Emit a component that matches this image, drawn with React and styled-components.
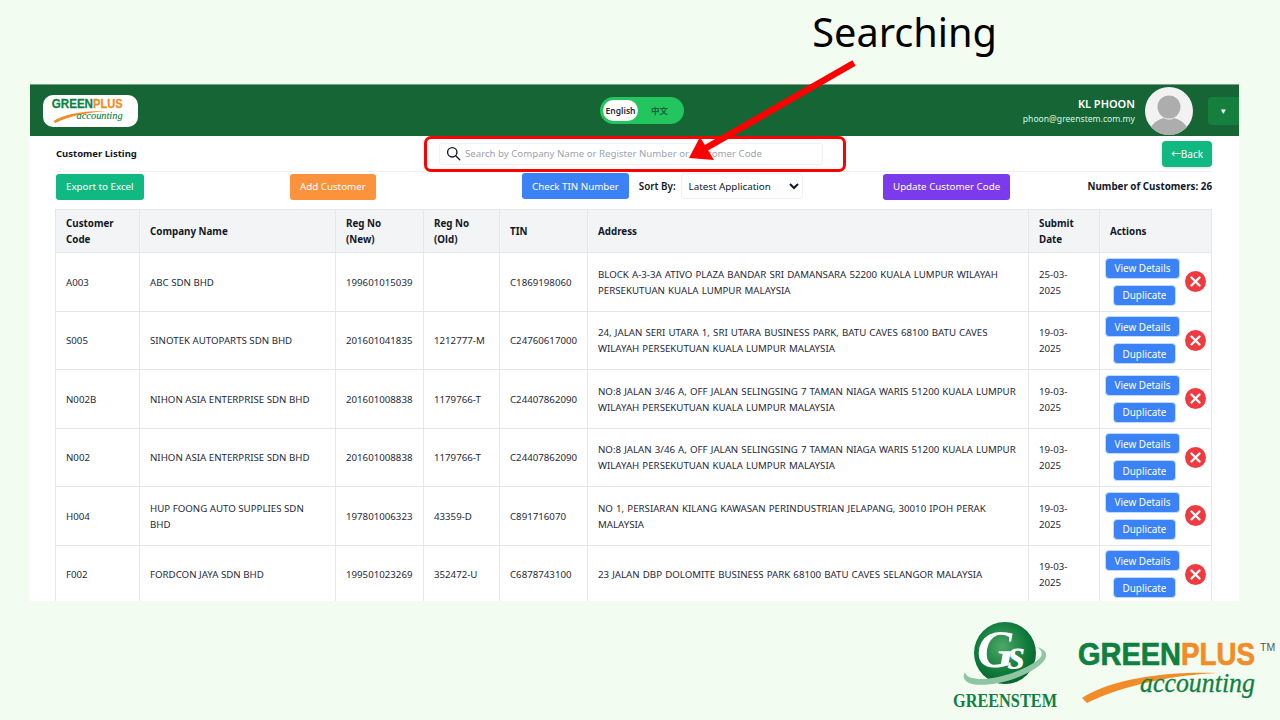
import styled, { createGlobalStyle } from "styled-components";
import { useState } from "react";

const customers = [
  {
    code: "A003",
    name: "ABC SDN BHD",
    regNew: "199601015039",
    regOld: "",
    tin: "C1869198060",
    address:
      "BLOCK A-3-3A ATIVO PLAZA BANDAR SRI DAMANSARA 52200 KUALA LUMPUR WILAYAH PERSEKUTUAN KUALA LUMPUR MALAYSIA",
    date: "25-03-2025",
  },
  {
    code: "S005",
    name: "SINOTEK AUTOPARTS SDN BHD",
    regNew: "201601041835",
    regOld: "1212777-M",
    tin: "C24760617000",
    address:
      "24, JALAN SERI UTARA 1, SRI UTARA BUSINESS PARK, BATU CAVES 68100 BATU CAVES WILAYAH PERSEKUTUAN KUALA LUMPUR MALAYSIA",
    date: "19-03-2025",
  },
  {
    code: "N002B",
    name: "NIHON ASIA ENTERPRISE SDN BHD",
    regNew: "201601008838",
    regOld: "1179766-T",
    tin: "C24407862090",
    address:
      "NO:8 JALAN 3/46 A, OFF JALAN SELINGSING 7 TAMAN NIAGA WARIS 51200 KUALA LUMPUR WILAYAH PERSEKUTUAN KUALA LUMPUR MALAYSIA",
    date: "19-03-2025",
  },
  {
    code: "N002",
    name: "NIHON ASIA ENTERPRISE SDN BHD",
    regNew: "201601008838",
    regOld: "1179766-T",
    tin: "C24407862090",
    address:
      "NO:8 JALAN 3/46 A, OFF JALAN SELINGSING 7 TAMAN NIAGA WARIS 51200 KUALA LUMPUR WILAYAH PERSEKUTUAN KUALA LUMPUR MALAYSIA",
    date: "19-03-2025",
  },
  {
    code: "H004",
    name: "HUP FOONG AUTO SUPPLIES SDN BHD",
    regNew: "197801006323",
    regOld: "43359-D",
    tin: "C891716070",
    address:
      "NO 1, PERSIARAN KILANG KAWASAN PERINDUSTRIAN JELAPANG, 30010 IPOH PERAK MALAYSIA",
    date: "19-03-2025",
  },
  {
    code: "F002",
    name: "FORDCON JAYA SDN BHD",
    regNew: "199501023269",
    regOld: "352472-U",
    tin: "C6878743100",
    address: "23 JALAN DBP DOLOMITE BUSINESS PARK 68100 BATU CAVES SELANGOR MALAYSIA",
    date: "19-03-2025",
  },
];

const GreenplusLogo = ({ width, height, tm }) => (
  <svg width={width} height={height} viewBox="0 0 200 70">
    <text x="2" y="27" fontFamily="'Liberation Sans', sans-serif" fontWeight="700" fontSize="31" fill="#0f8040" stroke="#0f8040" strokeWidth="0.7" textLength="103" lengthAdjust="spacingAndGlyphs">
      GREEN
    </text>
    <text x="105" y="27" fontFamily="'Liberation Sans', sans-serif" fontWeight="700" fontSize="31" fill="#f28c28" stroke="#f28c28" strokeWidth="0.7" textLength="74" lengthAdjust="spacingAndGlyphs">
      PLUS
    </text>
    {tm && (
      <text x="184" y="13" fontFamily="'Liberation Sans', sans-serif" fontSize="10.5" fill="#555">
        TM
      </text>
    )}
    <path d="M6 60 C30 44 80 33 141 35 C100 37 50 46 11 65 Z" fill="#f28c28" />
    <text x="64" y="54" fontFamily="'Liberation Serif', serif" fontStyle="italic" fontSize="28" fill="#0f8040" stroke="#0f8040" strokeWidth="0.3" textLength="115" lengthAdjust="spacingAndGlyphs">
      accounting
    </text>
  </svg>
);

const GreenstemLogo = () => (
  <svg width="106" height="90" viewBox="0 0 106 90">
    <defs>
      <radialGradient id="ball" cx="0.45" cy="0.4" r="0.7">
        <stop offset="0" stopColor="#4ea868" />
        <stop offset="0.6" stopColor="#0e7a3a" />
        <stop offset="1" stopColor="#06592a" />
      </radialGradient>
    </defs>
    <circle cx="53" cy="31" r="31" fill="url(#ball)" />
    <path d="M85 25 C95 28 97 34 90 41 C76 55 40 66 20 62 C12 60 10 55 13 50 C14 55 20 57 30 57 C52 57 80 44 88 36 C91 32 90 28 85 25 Z" fill="#8fc5a0" />
    <text x="25" y="45" fontFamily="'Liberation Serif', serif" fontStyle="italic" fontWeight="700" fontSize="52" fill="#fff">
      G
    </text>
    <text x="56" y="47" fontFamily="'Liberation Serif', serif" fontStyle="italic" fontWeight="700" fontSize="44" fill="#fff">
      s
    </text>
    <text x="53" y="85" textAnchor="middle" fontFamily="'Liberation Serif', serif" fontWeight="700" fontSize="18" fill="#0f8040" textLength="104" lengthAdjust="spacingAndGlyphs">
      GREENSTEM
    </text>
  </svg>
);

const SearchIcon = () => (
  <svg width="15" height="15" viewBox="0 0 24 24" fill="none" stroke="#111827" strokeWidth="2.2" strokeLinecap="round">
    <circle cx="10" cy="10" r="7.5" />
    <path d="M16 16l6 6" />
  </svg>
);

const RemoveIcon = () => (
  <svg width="21" height="21" viewBox="0 0 21 21">
    <circle cx="10.5" cy="10.5" r="10.5" fill="#ef3b40" />
    <path d="M6.5 6.5l8 8M14.5 6.5l-8 8" stroke="#fff" strokeWidth="2.4" strokeLinecap="round" />
  </svg>
);

const AvatarImage = () => (
  <svg width="48" height="48" viewBox="0 0 48 48">
    <circle cx="24" cy="24" r="24" fill="#f2f2f2" />
    <circle cx="24" cy="20" r="11.5" fill="#adadad" />
    <path d="M6 40 C10 34 15 32 19 31 C22 33 26 33 29 31 C33 32 38 34 42 40 A24 24 0 0 1 6 40 Z" fill="#adadad" />
  </svg>
);

export default function App() {
  const [sort, setSort] = useState("latest");
  return (
    <Slide>
      <GlobalStyle />
      <Caption>Searching</Caption>
      <AppWindow>
        <Header>
          <LogoPill>
            <GreenplusLogo width={80} height={28} />
          </LogoPill>
          <LangToggle>
            <LangOption active>English</LangOption>
            <LangOption>中文</LangOption>
          </LangToggle>
          <UserArea>
            <UserText>
              <UserName>KL PHOON</UserName>
              <UserMail>phoon@greenstem.com.my</UserMail>
            </UserText>
            <AvatarImage />
            <MenuButton>▾</MenuButton>
          </UserArea>
        </Header>
        <Content>
          <TitleRow>
            <PageTitle>Customer Listing</PageTitle>
            <SearchBox>
              <SearchIcon />
              <SearchInput placeholder="Search by Company Name or Register Number or Customer Code" />
            </SearchBox>
            <BackButton>←Back</BackButton>
          </TitleRow>
          <ActionRow>
            <div>
              <ActionButton color="#10b981">Export to Excel</ActionButton>
            </div>
            <div>
              <ActionButton color="#fb923c">Add Customer</ActionButton>
            </div>
            <SortGroup>
              <ActionButton color="#3b82f6">Check TIN Number</ActionButton>
              <SortLabel>Sort By:</SortLabel>
              <SortSelect value={sort} onChange={(e) => setSort(e.target.value)}>
                <option value="latest">Latest Application</option>
                <option value="oldest">Oldest Application</option>
              </SortSelect>
            </SortGroup>
            <div>
              <ActionButton color="#7c3aed">Update Customer Code</ActionButton>
            </div>
            <CustomerCount>Number of Customers: 26</CustomerCount>
          </ActionRow>
          <Table>
            <colgroup>
              <col width="84" />
              <col width="196" />
              <col width="88" />
              <col width="76" />
              <col width="88" />
              <col width="441" />
              <col width="71" />
              <col width="112" />
            </colgroup>
            <thead>
              <tr>
                <Th>Customer Code</Th>
                <Th>Company Name</Th>
                <Th>
                  Reg No
                  <br />
                  (New)
                </Th>
                <Th>
                  Reg No
                  <br />
                  (Old)
                </Th>
                <Th>TIN</Th>
                <Th>Address</Th>
                <Th>Submit Date</Th>
                <Th>Actions</Th>
              </tr>
            </thead>
            <tbody>
              {customers.map((c) => (
                <tr key={c.code}>
                  <Td>{c.code}</Td>
                  <Td>{c.name}</Td>
                  <Td>{c.regNew}</Td>
                  <Td>{c.regOld}</Td>
                  <Td>{c.tin}</Td>
                  <AddressCell>{c.address}</AddressCell>
                  <Td>{c.date}</Td>
                  <ActionCell>
                    <RowActions>
                      <RowButtons>
                        <RowButton>View Details</RowButton>
                        <RowButton small>Duplicate</RowButton>
                      </RowButtons>
                      <RemoveIcon />
                    </RowActions>
                  </ActionCell>
                </tr>
              ))}
            </tbody>
          </Table>
        </Content>
      </AppWindow>
      <Footer>
        <GreenstemLogo />
        <PlusMark>
          <GreenplusLogo width={200} height={70} tm />
        </PlusMark>
      </Footer>
      <HighlightBox />
      <ArrowLayer width="1280" height="720" viewBox="0 0 1280 720">
        <path d="M854 63L706 148" stroke="#ff0000" strokeWidth="6.5" fill="none" />
        <path d="M689 158L700 137L714 160Z" fill="#ff0000" />
      </ArrowLayer>
    </Slide>
  );
}

const GlobalStyle = createGlobalStyle`
  html, body {
    margin: 0;
    padding: 0;
    background: #f3fcf0;
  }
  * {
    box-sizing: border-box;
  }
`;

const Slide = styled.div`
  position: relative;
  width: 1280px;
  height: 720px;
  overflow: hidden;
  background: #f3fcf0;
  font-family: "Noto Sans", "Noto Sans CJK SC", sans-serif;
  color: #111827;
`;

const Caption = styled.div`
  height: 84px;
  padding: 6px 283px 0 0;
  text-align: right;
  font-size: 39.7px;
  line-height: 52px;
  color: #000;
`;

const AppWindow = styled.div`
  width: 1209px;
  height: 517px;
  margin-left: 30px;
  background: #fff;
  overflow: hidden;
`;

const Header = styled.header`
  height: 52px;
  background: #166534;
  border-top: 1px solid #7f9c8a;
  padding: 0 0 0 13px;
  display: grid;
  grid-template-columns: 1fr auto 1fr;
  align-items: center;
`;

const LogoPill = styled.div`
  width: 95px;
  height: 32px;
  background: #fff;
  border-radius: 10px;
  display: flex;
  align-items: center;
  justify-content: center;
`;

const LangToggle = styled.div`
  width: 84px;
  height: 27px;
  margin-left: 2px;
  padding: 3px;
  background: #22c55e;
  border-radius: 14px;
  display: flex;
  align-items: center;
  font-size: 8.5px;
  font-weight: 600;
`;

const LangOption = styled.span`
  width: ${({ active }) => (active ? "36px" : "44px")};
  height: 21px;
  line-height: 21px;
  text-align: center;
  border-radius: 11px;
  background: ${({ active }) => (active ? "#fff" : "transparent")};
  color: ${({ active }) => (active ? "#1f2937" : "#166534")};
`;

const UserArea = styled.div`
  display: flex;
  align-items: center;
  justify-content: flex-end;
`;

const UserText = styled.div`
  text-align: right;
  margin-right: 10px;
`;

const UserName = styled.div`
  font-size: 11px;
  font-weight: 600;
  line-height: 16px;
  color: #fff;
`;

const UserMail = styled.div`
  font-size: 8.6px;
  line-height: 14px;
  color: #d1fae5;
`;

const MenuButton = styled.button`
  width: 31px;
  height: 28px;
  margin-left: 15px;
  padding: 0;
  border: none;
  border-radius: 4px 0 0 4px;
  background: #15803d;
  color: #fff;
  font-size: 9px;
`;

const Content = styled.main`
  padding: 0 27px 0 26px;
`;

const TitleRow = styled.div`
  height: 36px;
  display: flex;
  align-items: center;
  border-bottom: 1px solid #f0f0f0;
`;

const PageTitle = styled.h1`
  width: 383px;
  margin: 0;
  font-size: 9.5px;
  font-weight: 700;
  color: #111827;
`;

const SearchBox = styled.label`
  width: 384px;
  height: 22px;
  padding-left: 6px;
  display: flex;
  align-items: center;
  gap: 4px;
  background: #fff;
  border: 1px solid #eef0f3;
  border-radius: 3px;
`;

const SearchInput = styled.input`
  flex: 1;
  min-width: 0;
  border: none;
  outline: none;
  padding: 0;
  font-family: inherit;
  font-size: 9.67px;
  &::placeholder {
    color: #9ca3af;
    opacity: 1;
  }
`;

const BackButton = styled.button`
  width: 50px;
  height: 26px;
  margin-left: auto;
  padding: 0;
  border: none;
  border-radius: 4px;
  background: #10b981;
  color: #fff;
  font-family: inherit;
  font-size: 10px;
  box-shadow: 0 1px 3px rgba(0, 0, 0, 0.15);
`;

const ActionRow = styled.div`
  display: grid;
  grid-template-columns: 234px 232px 361px 126px 1fr;
  align-items: center;
  margin-top: 1px;
  height: 26px;
`;

const ActionButton = styled.button`
  height: 26px;
  padding: 0 10px;
  border: none;
  border-radius: 3px;
  background: ${({ color }) => color};
  color: #fff;
  font-family: inherit;
  font-size: 9.75px;
  white-space: nowrap;
`;

const SortGroup = styled.div`
  display: flex;
  align-items: center;
`;

const SortLabel = styled.span`
  margin: 0 5px 0 10px;
  font-size: 9.8px;
  font-weight: 600;
  white-space: nowrap;
`;

const SortSelect = styled.select`
  width: 122px;
  height: 26px;
  padding-left: 3px;
  border: 1px solid #eef0f3;
  border-radius: 3px;
  background: #fff;
  font-family: inherit;
  font-size: 9.8px;
  color: #111827;
`;

const CustomerCount = styled.div`
  text-align: right;
  font-size: 9.8px;
  font-weight: 700;
  white-space: nowrap;
`;

const Table = styled.table`
  width: 1156px;
  margin: 10px 0 0 -1px;
  border-collapse: collapse;
  table-layout: fixed;
  border: 1px solid #e5e7eb;
`;

const Th = styled.th`
  height: 43px;
  padding: 2px 10px 0;
  background: #f3f4f6;
  border: 1px solid #e5e7eb;
  text-align: left;
  font-size: 9.8px;
  font-weight: 700;
  line-height: 16px;
  color: #111827;
`;

const Td = styled.td`
  height: 58.5px;
  padding: 2px 10px 0;
  border: 1px solid #e5e7eb;
  font-size: 9.7px;
  line-height: 16px;
  color: #1f2937;
`;

const AddressCell = styled(Td)`
  word-spacing: 0.6px;
`;

const ActionCell = styled(Td)`
  padding: 0 5px;
`;

const RowActions = styled.div`
  display: flex;
  align-items: center;
  gap: 5px;
`;

const RowButtons = styled.div`
  width: 75px;
  display: flex;
  flex-direction: column;
  align-items: flex-end;
  gap: 6px;
`;

const RowButton = styled.button`
  width: ${({ small }) => (small ? "63px" : "75px")};
  margin-right: ${({ small }) => (small ? "4px" : "0")};
  height: 21px;
  padding: 0;
  border: 1px solid #bfdbfe;
  border-radius: 4px;
  background: #3b82f6;
  color: #fff;
  font-family: inherit;
  font-size: 9.9px;
`;

const Footer = styled.footer`
  height: 119px;
  padding: 21px 4px 0 0;
  display: flex;
  justify-content: flex-end;
  align-items: flex-start;
  gap: 18px;
`;

const PlusMark = styled.div`
  display: flex;
  margin-top: 16px;
`;

/* slide annotations drawn over the screenshot */
const HighlightBox = styled.div`
  position: absolute;
  left: 424px;
  top: 136px;
  width: 422px;
  height: 36px;
  border: 3px solid #ff0000;
  border-radius: 7px;
  pointer-events: none;
`;

const ArrowLayer = styled.svg`
  position: absolute;
  left: 0;
  top: 0;
  pointer-events: none;
`;
